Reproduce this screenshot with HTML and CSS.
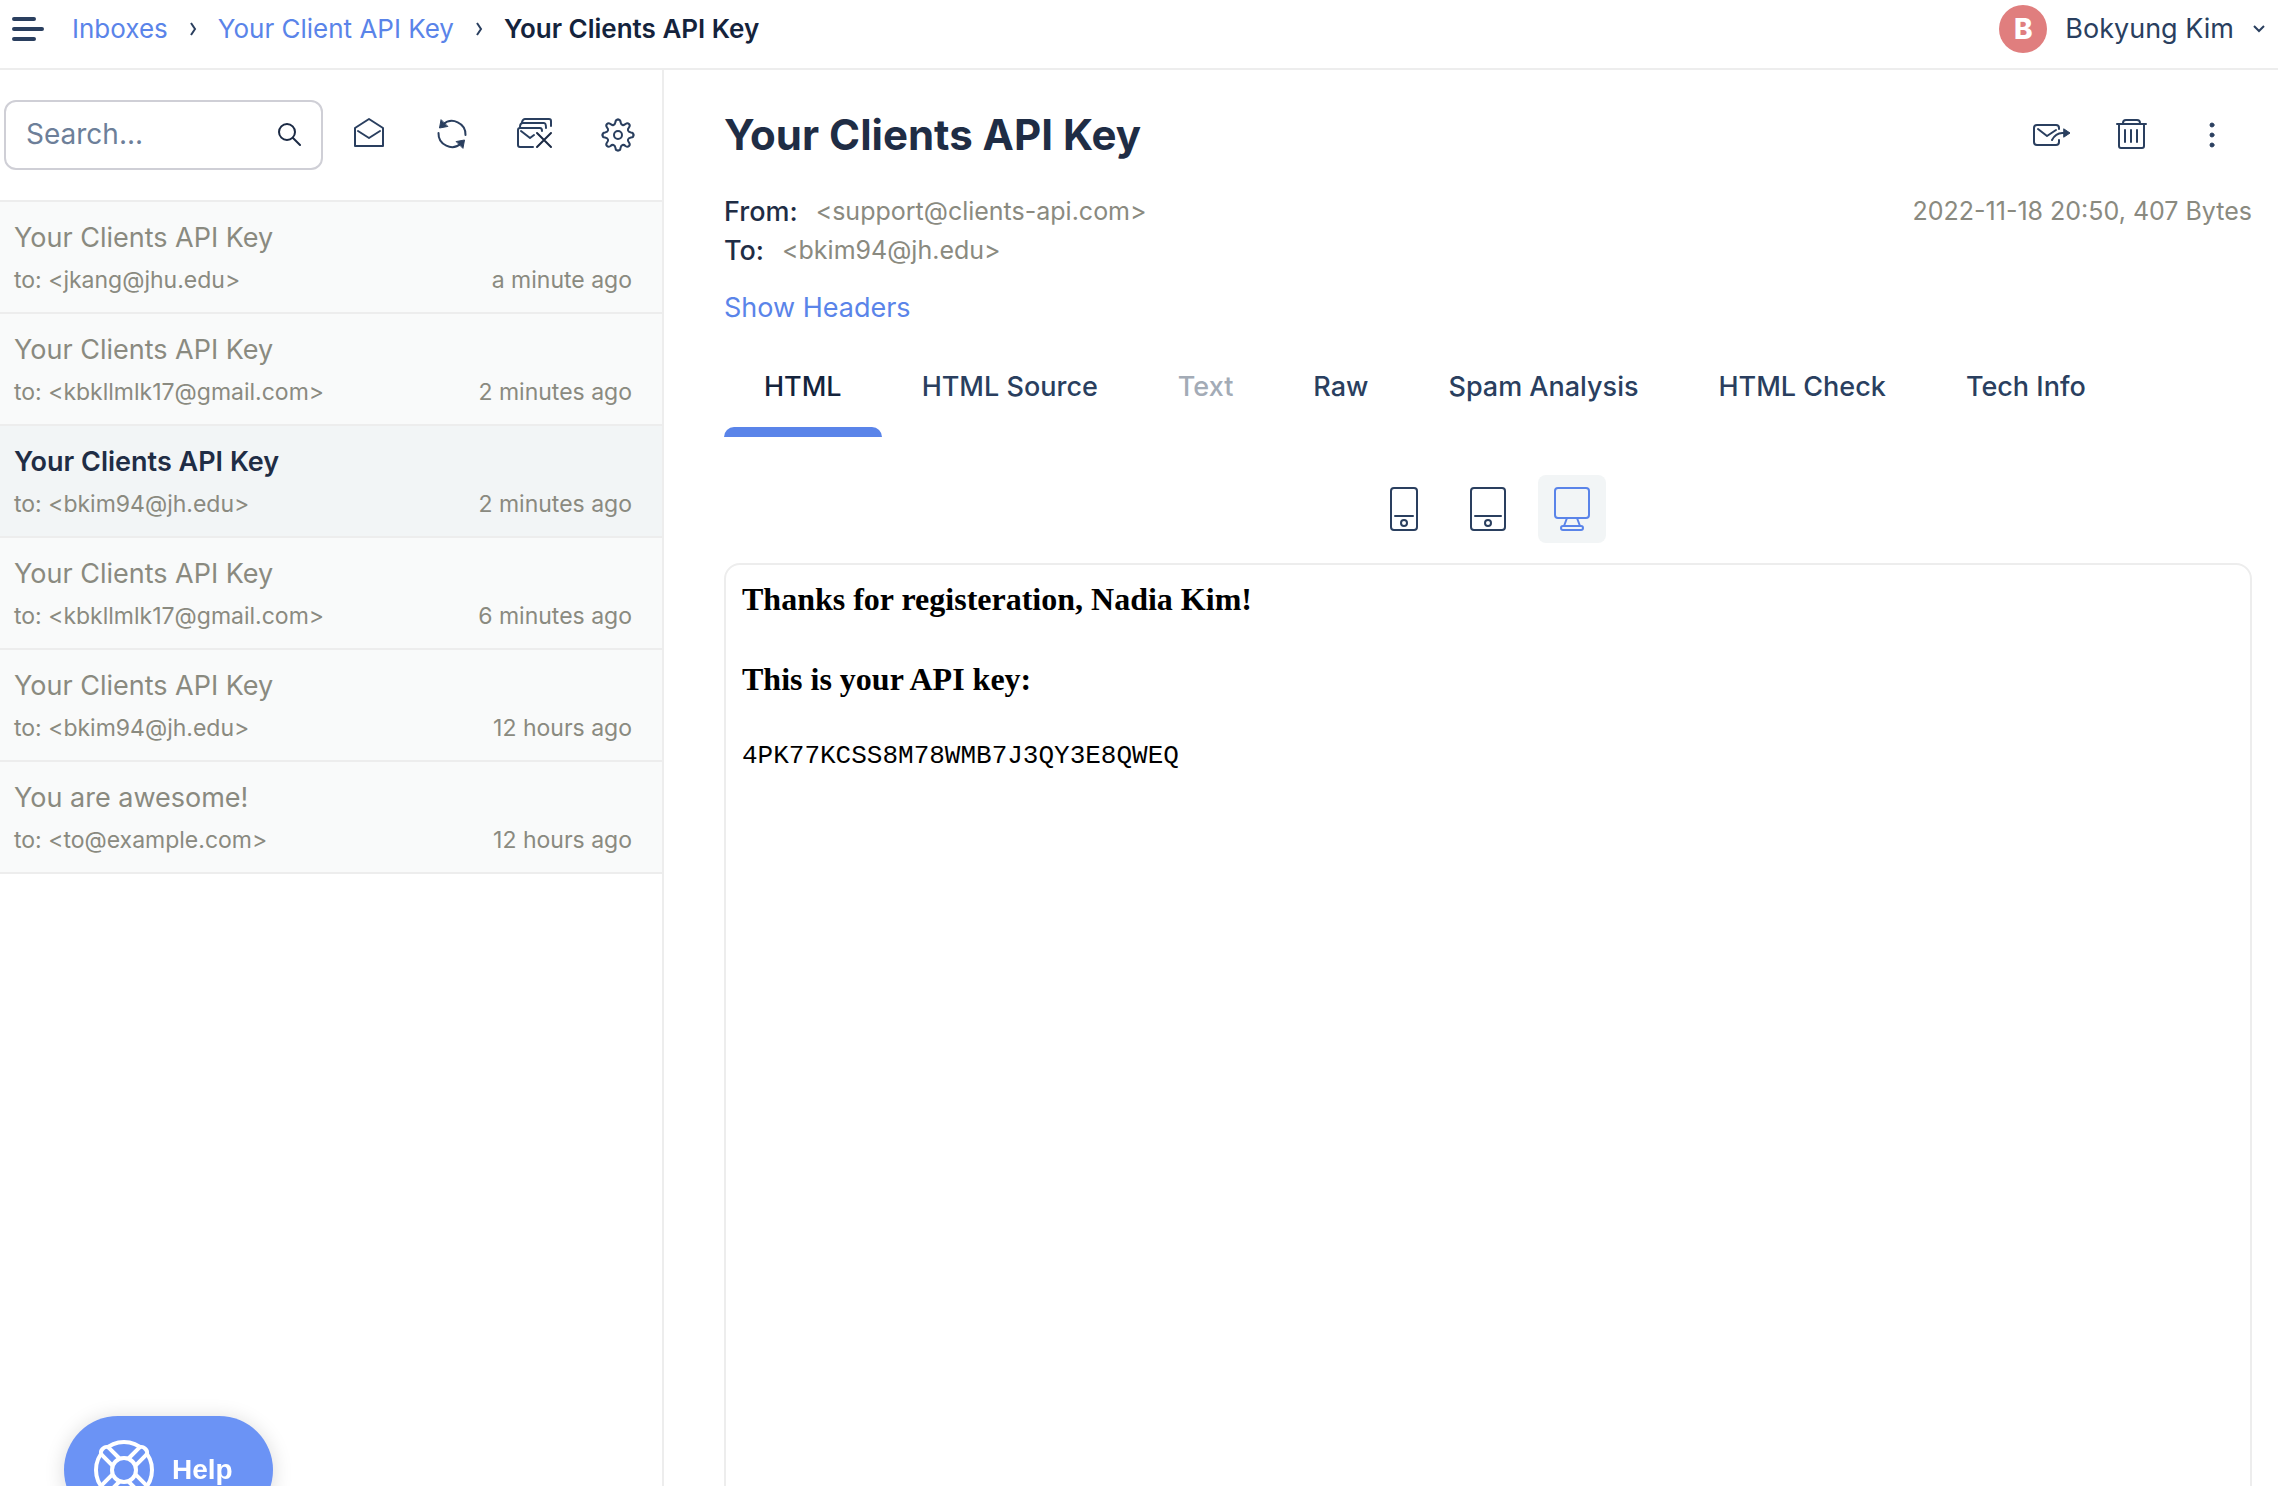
FILE: index.html
```html
<!DOCTYPE html>
<html lang="en">
<head>
<meta charset="utf-8">
<title>Your Clients API Key</title>
<link rel="stylesheet" href="styles.css">
</head>
<body>
<header class="topbar">
  <button class="icon-button menu-button" aria-label="Menu">
    <svg width="32" height="26" viewBox="0 0 32 26" stroke="currentColor" stroke-width="4" stroke-linecap="round"><path d="M2 3h20M2 13h28M2 23h20"/></svg>
  </button>
  <nav class="breadcrumbs" aria-label="Breadcrumb">
    <a href="#">Inboxes</a>
    <svg class="separator" width="8" height="14" viewBox="0 0 8 14"><path d="M2 1l4 6-4 6"/></svg>
    <a href="#">Your Client API Key</a>
    <svg class="separator" width="8" height="14" viewBox="0 0 8 14"><path d="M2 1l4 6-4 6"/></svg>
    <span class="current">Your Clients API Key</span>
  </nav>
  <button class="account">
    <span class="avatar">B</span>
    <span>Bokyung Kim</span>
    <svg class="chevron" width="14" height="10" viewBox="0 0 14 10"><path d="M2 2l5 5 5-5"/></svg>
  </button>
</header>
<div class="layout">
  <aside class="sidebar">
    <div class="toolbar">
      <div class="search">
        <input type="text" placeholder="Search..." aria-label="Search">
        <svg class="icon dark" width="24" height="24" viewBox="0 0 24 24"><circle cx="10" cy="9" r="8"/><path d="M16 15l7 7"/></svg>
      </div>
      <div class="tools">
        <button class="icon-button" aria-label="Mark all as read">
          <svg class="icon" width="36" height="36" viewBox="0 0 36 36"><path d="M4 11L18 2l14 9v18H4zM7 14l11 7 11-7"/></svg>
        </button>
        <button class="icon-button" aria-label="Refresh">
          <svg class="icon" width="36" height="36" viewBox="0 0 36 36"><path d="M9 7.500A13.500 13.500 0 0 1 31.500 18M27 26.500A13.500 13.500 0 0 1 4.500 16"/><path class="solid" d="M7 3l-1.500 8 8-1.500zM29 31l1.500-8-8 1.500z"/></svg>
        </button>
        <button class="icon-button" aria-label="Delete all">
          <svg class="icon" width="36" height="36" viewBox="0 0 36 36"><path d="M16 30H3q-2 0-2-2V13q0-2 2-2h20q2 0 2 3M4 14l9 7 4-3M3 10q0-4 3-4h21q2 0 2 5M5 5q1-3 3-3h24q2 0 2 2v5"/><path class="cross" d="M20 16l14 14M34 16L20 30"/></svg>
        </button>
        <button class="icon-button" aria-label="Settings">
          <svg class="icon" width="36" height="36" viewBox="0 0 36 36"><circle cx="18" cy="18" r="4"/><path id="gear-quarter" d="M18 2.500Q20.500 2.500 20.500 5Q21 7.500 22.500 8Q24 8.500 25.500 7Q27.500 5.500 29 7Q30.500 8.500 29 10.500Q27.500 12 28 13.500Q28.500 15 31 15.500Q33.500 15.500 33.500 18"/><use href="#gear-quarter" transform="rotate(90 18 18)"/><use href="#gear-quarter" transform="rotate(180 18 18)"/><use href="#gear-quarter" transform="rotate(270 18 18)"/></svg>
        </button>
      </div>
    </div>
    <ul class="messages">
      <li><a class="message" href="#"><span class="subject">Your Clients API Key</span><span class="meta"><span>to: &lt;jkang@jhu.edu&gt;</span><time>a minute ago</time></span></a></li>
      <li><a class="message" href="#"><span class="subject">Your Clients API Key</span><span class="meta"><span>to: &lt;kbkllmlk17@gmail.com&gt;</span><time>2 minutes ago</time></span></a></li>
      <li><a class="message selected" href="#"><span class="subject">Your Clients API Key</span><span class="meta"><span>to: &lt;bkim94@jh.edu&gt;</span><time>2 minutes ago</time></span></a></li>
      <li><a class="message" href="#"><span class="subject">Your Clients API Key</span><span class="meta"><span>to: &lt;kbkllmlk17@gmail.com&gt;</span><time>6 minutes ago</time></span></a></li>
      <li><a class="message" href="#"><span class="subject">Your Clients API Key</span><span class="meta"><span>to: &lt;bkim94@jh.edu&gt;</span><time>12 hours ago</time></span></a></li>
      <li><a class="message" href="#"><span class="subject">You are awesome!</span><span class="meta"><span>to: &lt;to@example.com&gt;</span><time>12 hours ago</time></span></a></li>
    </ul>
  </aside>
  <main class="content">
    <div class="title-row">
      <h1>Your Clients API Key</h1>
      <div class="actions">
        <button class="icon-button" aria-label="Forward">
          <svg class="icon" width="38" height="36" viewBox="0 0 38 36"><path d="M27 12V11q0-3-3-3H5Q2 8 2 11v14q0 3 3 3h19q3 0 3-3v-2M6 12l9 7 9-6M20 23q4-8 12-7"/><path class="solid" d="M32 12l6 4-6 4z"/></svg>
        </button>
        <button class="icon-button" aria-label="Delete">
          <svg class="icon" width="36" height="36" viewBox="0 0 36 36"><path d="M3 7h29M9 6q0-3 3-3h11q3 0 3 3M5 7v22q0 2 2 2h21q2 0 2-2V7M11 13v12M17 13v12M23 13v12"/></svg>
        </button>
        <button class="icon-button" aria-label="More">
          <svg class="icon" width="36" height="36" viewBox="0 0 36 36"><g class="solid"><circle cx="18" cy="8" r="2"/><circle cx="18" cy="18" r="2"/><circle cx="18" cy="28" r="2"/></g></svg>
        </button>
      </div>
    </div>
    <div class="details">
      <dl class="addresses">
        <div><dt>From:</dt><dd>&lt;support@clients-api.com&gt;</dd></div>
        <div><dt>To:</dt><dd>&lt;bkim94@jh.edu&gt;</dd></div>
      </dl>
      <p class="received">2022-11-18 20:50, 407 Bytes</p>
    </div>
    <a class="show-headers" href="#">Show Headers</a>
    <div class="tabs" role="tablist">
      <button class="tab active" role="tab" aria-selected="true">HTML</button>
      <button class="tab" role="tab">HTML Source</button>
      <button class="tab" role="tab" disabled>Text</button>
      <button class="tab" role="tab">Raw</button>
      <button class="tab" role="tab">Spam Analysis</button>
      <button class="tab" role="tab">HTML Check</button>
      <button class="tab" role="tab">Tech Info</button>
    </div>
    <div class="devices">
      <button class="device" aria-label="Mobile"><svg class="icon" width="44" height="44" viewBox="0 0 44 44"><rect x="9" y="1" width="26" height="42" rx="3"/><path d="M13 29h18"/><circle cx="22" cy="36" r="3"/></svg></button>
      <button class="device" aria-label="Tablet"><svg class="icon" width="44" height="44" viewBox="0 0 44 44"><rect x="5" y="1" width="34" height="42" rx="3"/><path d="M9 29h26"/><circle cx="22" cy="36" r="3"/></svg></button>
      <button class="device active" aria-label="Desktop"><svg class="icon" width="44" height="44" viewBox="0 0 44 44"><rect x="5" y="1" width="34" height="30" rx="3"/><path d="M17 31l-3 8M27 31l3 8"/><rect x="11" y="39" width="22" height="4" rx="2"/></svg></button>
    </div>
    <article class="preview">
      <h2>Thanks for registeration, Nadia Kim!</h2>
      <h2>This is your API key:</h2>
      <pre>4PK77KCSS8M78WMB7J3QY3E8QWEQ</pre>
    </article>
  </main>
</div>
<button class="help">
  <svg class="lifebuoy" width="60" height="60" viewBox="0 0 60 60"><circle cx="30" cy="30" r="28"/><rect id="strap" x="25" y="0" width="10" height="22" rx="4" transform="rotate(45 30 30)"/><use href="#strap" transform="rotate(90 30 30)"/><use href="#strap" transform="rotate(180 30 30)"/><use href="#strap" transform="rotate(270 30 30)"/><circle cx="30" cy="30" r="12"/></svg>
  Help
</button>
</body>
</html>
```

FILE: styles.css
```css
* { box-sizing: border-box; }

body {
  margin: 0;
  height: 100vh;
  display: flex;
  flex-direction: column;
  overflow: hidden;
  background: #fff;
  color: #1f2d45;
  font: 27px/36px Inter, "Liberation Sans", sans-serif;
}

button { font: inherit; color: inherit; background: none; border: 0; padding: 0; cursor: pointer; }
a { color: #5a84e9; text-decoration: none; }
h1, h2, p, dl, dd, pre { margin: 0; }
svg { display: block; flex: none; }

.icon { fill: none; stroke: #2a3f5f; stroke-width: 2; stroke-linejoin: round; stroke-linecap: round; }
.icon.dark, .icon .cross { stroke: #1b2a44; }
.icon .solid { fill: #2a3f5f; stroke-width: 1; }
.icon-button { display: flex; color: #2a3f5f; }

.topbar {
  flex: none;
  display: flex;
  align-items: center;
  padding: 5px 12px 15px;
  border-bottom: 2px solid #ededed;
}
.breadcrumbs { display: flex; align-items: center; gap: 21px; margin-left: 28px; font-size: 26px; }
.separator, .chevron { fill: none; stroke: #2a3f5f; stroke-width: 2; }
.current { font-weight: 600; color: #14233c; }
.account { display: flex; align-items: center; gap: 18px; margin-left: auto; color: #2a3f5f; }
.avatar {
  width: 48px;
  line-height: 48px;
  border-radius: 50%;
  background: #e07e7e;
  color: #fff;
  font-size: 28px;
  font-weight: 800;
}

.layout { flex: 1; min-height: 0; display: flex; }
.sidebar { flex: none; width: 664px; border-right: 2px solid #ededed; }
.toolbar { display: flex; align-items: center; justify-content: space-between; padding: 30px 26px 30px 4px; border-bottom: 2px solid #ededed; }
.search {
  display: flex;
  align-items: center;
  width: 319px;
  height: 70px;
  padding: 0 20px;
  border: 2px solid #cfcfd6;
  border-radius: 12px;
}
.search input { flex: 1; min-width: 0; padding: 0 0 2px; border: 0; outline: 0; font: inherit; font-size: 28px; color: inherit; }
.search input::placeholder { color: #6d7f99; opacity: 1; }
.tools { display: flex; gap: 47px; }

.messages { margin: 0; padding: 0; list-style: none; }
.message {
  display: flex;
  flex-direction: column;
  gap: 4px;
  padding: 16px 30px 14px 14px;
  border-bottom: 2px solid #ededed;
  background: #f9fafa;
  color: #8a8a80;
}
.message.selected { background: #f2f5f6; }
.subject { line-height: 40px; }
.selected .subject { font-weight: 600; color: #1f2d45; }
.meta { display: flex; justify-content: space-between; font-size: 23px; }

.content { flex: 1; min-width: 0; padding: 35px 26px 0 60px; overflow: hidden; }
.title-row { display: flex; align-items: center; justify-content: space-between; }
h1 { font-size: 42px; line-height: 60px; font-weight: 700; }
.actions { display: flex; gap: 44px; padding-right: 22px; }
.details { display: flex; justify-content: space-between; margin-top: 27px; line-height: 39px; }
.addresses div { display: flex; gap: 18px; }
dt { font-weight: 500; }
dd, .received { font-size: 25px; color: #8a8a80; }
.show-headers { display: inline-block; margin-top: 20px; }
.tabs { display: flex; margin-top: 8px; }
.tab { position: relative; padding: 35px 40px 32px; color: #2a3f5f; font-weight: 500; }
.tab:disabled { color: #a3abb6; }
.tab.active { color: #14233c; }
.tab.active::after { content: ""; position: absolute; left: 0; right: 0; bottom: 0; height: 10px; border-radius: 10px 10px 0 0; background: #5a84e9; }
.devices { display: flex; justify-content: center; gap: 16px; margin: 38px 0 20px; }
.device { display: flex; padding: 12px; border-radius: 8px; }
.device.active { background: #f2f5f6; }
.device.active .icon { stroke: #5a84e9; }
.preview { min-height: 100vh; padding: 16px; border: 2px solid #ededed; border-radius: 16px; color: #000; }
.preview h2 { margin-bottom: 44px; font: bold 32px/36px "Liberation Serif", serif; }
.preview pre { font: 26px/30px "Liberation Mono", monospace; }

.help {
  position: fixed;
  left: 64px;
  bottom: -38px;
  display: flex;
  align-items: center;
  gap: 18px;
  height: 108px;
  padding: 0 40px 0 30px;
  border-radius: 54px;
  background: #6b93f5;
  color: #fff;
  font: bold 28px/36px "Liberation Sans", sans-serif;
  box-shadow: 0 2px 20px rgba(0, 0, 0, 0.15);
}
.lifebuoy { fill: #6b93f5; stroke: #fff; stroke-width: 4; }
```
